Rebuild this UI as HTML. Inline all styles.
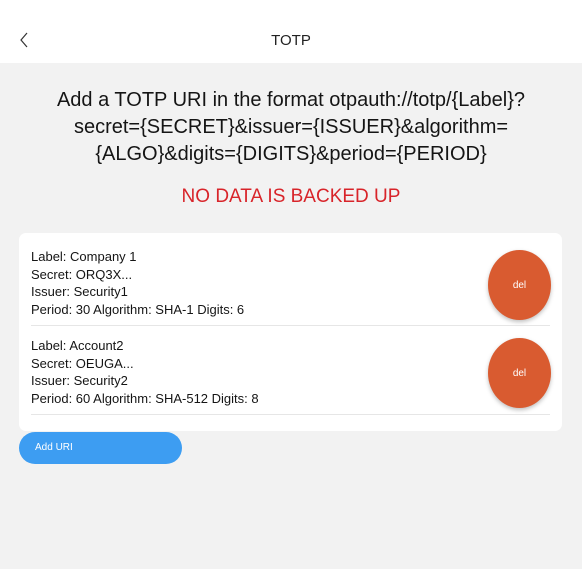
<!DOCTYPE html>
<html><head><meta charset="utf-8"><style>
*{margin:0;padding:0;box-sizing:border-box}
body{width:582px;height:569px;background:#f2f2f2;font-family:"Liberation Sans",sans-serif;position:relative;overflow:hidden;color:#1a1a1a}
.hdr{position:absolute;left:0;top:0;width:582px;height:63px;background:#fff}
.title{position:absolute;top:32px;left:0;width:582px;text-align:center;font-size:15px;color:#222}
.intro{position:absolute;top:87px;left:0;width:582px;text-align:center;font-size:20px;line-height:27px;color:#151515}
.warn{position:absolute;top:186px;left:0;width:582px;text-align:center;font-size:19px;color:#d8242a}
.card{position:absolute;left:19px;top:233px;width:543px;height:198px;background:#fff;border-radius:7px}
.row{position:absolute;left:12px;font-size:13px;line-height:17.7px;color:#151515}
.div{position:absolute;left:12px;width:519px;height:1px;background:#e6e6e6}
.del{position:absolute;left:469px;width:63px;height:70px;border-radius:50%;background:#d95b30;color:#fff;font-size:10px;display:flex;align-items:center;justify-content:center;box-shadow:0 2px 4px rgba(0,0,0,.25)}
.add{position:absolute;left:19px;top:432px;width:163px;height:32px;border-radius:16px;background:#3d9df2;color:#fff;font-size:10px;padding-left:16px;line-height:32px}
</style></head><body>
<div class="hdr">
<svg style="position:absolute;left:18px;top:31px" width="12" height="18" viewBox="0 0 12 18"><path d="M9 2 L3 9 L9 16" fill="none" stroke="#333" stroke-width="1.2"/></svg>
<div class="title">TOTP</div>
</div>
<div class="intro">Add a TOTP URI in the format otpauth://totp/{Label}?<br>secret={SECRET}&amp;issuer={ISSUER}&amp;algorithm=<br>{ALGO}&amp;digits={DIGITS}&amp;period={PERIOD}</div>
<div class="warn">NO DATA IS BACKED UP</div>
<div class="card">
<div class="row" style="top:15px">Label: Company 1<br>Secret: ORQ3X...<br>Issuer: Security1<br>Period: 30 Algorithm: SHA-1 Digits: 6</div>
<div class="del" style="top:17px">del</div>
<div class="div" style="top:92px"></div>
<div class="row" style="top:104px">Label: Account2<br>Secret: OEUGA...<br>Issuer: Security2<br>Period: 60 Algorithm: SHA-512 Digits: 8</div>
<div class="del" style="top:105px">del</div>
<div class="div" style="top:181px"></div>
</div>
<div class="add">Add URI</div>
</body></html>
